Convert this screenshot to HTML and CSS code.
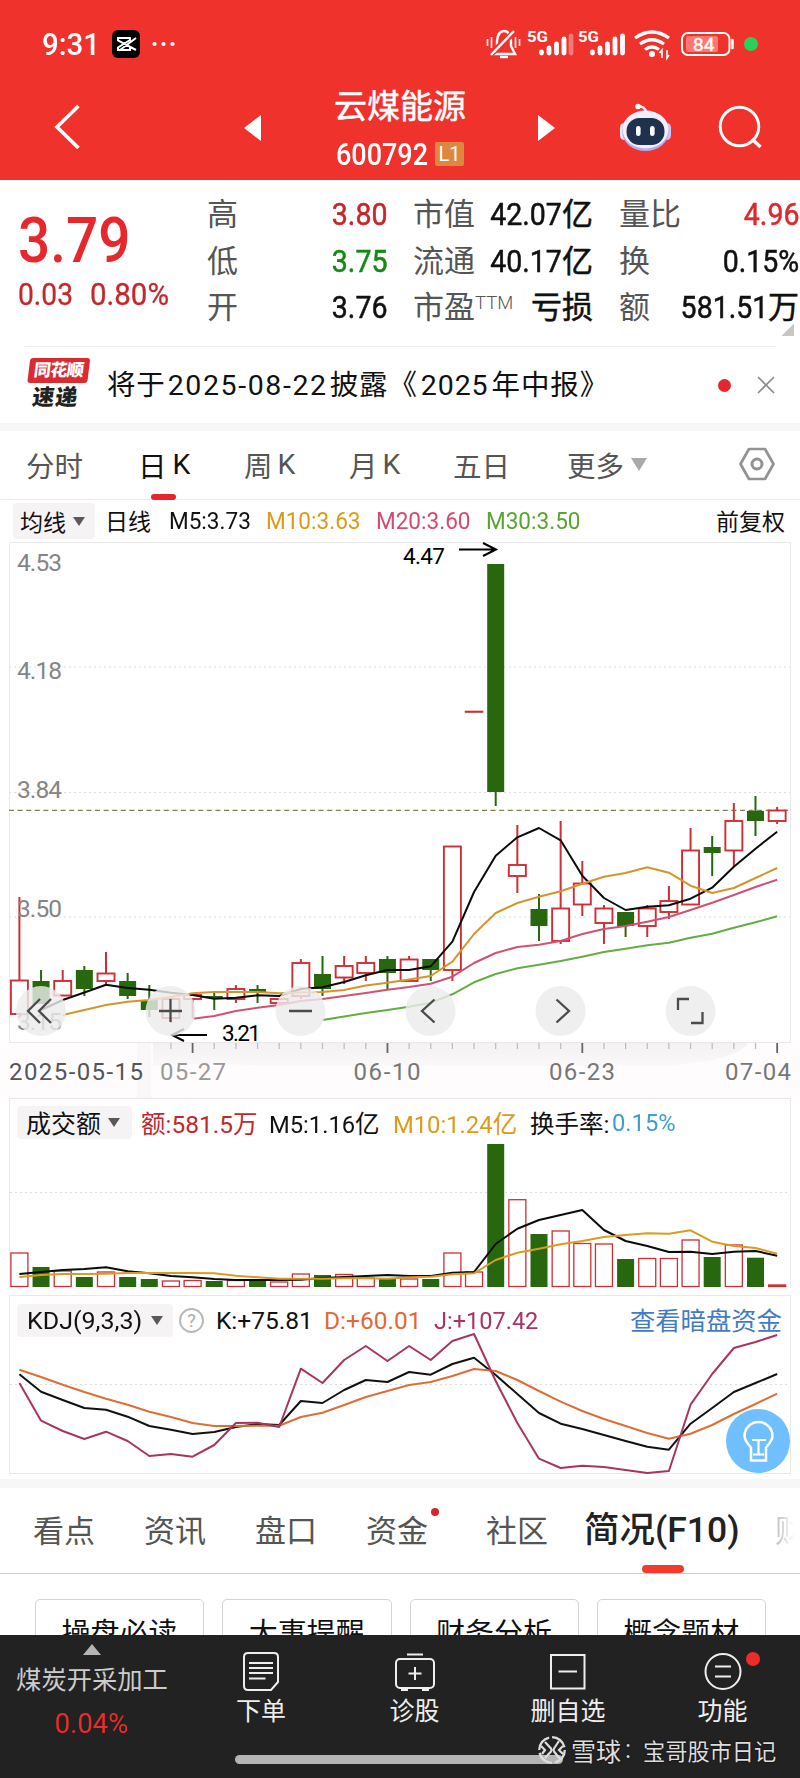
FILE: index.html
```html
<!DOCTYPE html>
<html lang="zh-CN">
<head>
<meta charset="utf-8">
<title>云煤能源 600792</title>
<link rel="stylesheet" href="styles.css">
</head>
<body>
<div class="screen">
  <header class="top">
    <div class="status">
      <span class="clock"><span class="din">9:31</span></span>
      <svg class="app-badge" width="28" height="28" viewBox="0 0 28 28"><rect width="28" height="28" rx="6" fill="#000"/><path d="M24 8 8 20H6V17.500L18 10V8H6V10.500L24 20M8 20H18V17" fill="none" stroke="#fff" stroke-width="2"/></svg>
      <svg class="dots" width="24" height="6" viewBox="0 0 24 6" fill="#fff"><circle cx="2.500" cy="3" r="2.100"/><circle cx="11.500" cy="3" r="2.100"/><circle cx="20.500" cy="3" r="2.100"/></svg>
      <svg class="indicators" width="280" height="36" viewBox="482 26 280 36">
        <g fill="none" stroke="#fff" stroke-width="2.400">
          <path d="M497 49V41Q498 31 504 31T511 41V46L515 54H493Z"/><path d="M490 55 514 32" stroke="#f0322c" stroke-width="6"/><path d="M491 55 514 31"/><path d="M500 57H508"/>
          <path d="M487.500 39V46M491.500 37V48M515.500 37V48M519.500 39V46" stroke-width="1.600"/>
        </g>
        <g fill="#fff" font-family="Roboto" font-size="15.500" font-weight="700"><text x="527" y="42" textLength="21" lengthAdjust="spacingAndGlyphs">5G</text><text x="578" y="42" textLength="21" lengthAdjust="spacingAndGlyphs">5G</text></g>
        <g stroke="#fff" stroke-width="4.800" stroke-linecap="round">
          <path d="M541.500 53V52M549 53V48M556.500 53V44M564 53V39M592.500 53V52M600 53V48M607.500 53V44M615 53V39M622.500 53V36"/><path d="M571 53V36" opacity=".35"/>
        </g>
        <g fill="none" stroke="#fff" stroke-width="3.200"><path d="M635 38Q652 26 669 38M640 44Q652 35.500 664 44M645 49.500Q652 44.500 659 49.500"/></g>
        <circle cx="652" cy="54" r="3" fill="#fff"/><path d="M662 58V50L659.500 53M667 50V58L669 55" fill="none" stroke="#fff" stroke-width="1.600"/>
        <rect x="682" y="33" width="47.500" height="22" rx="6" fill="none" stroke="#fff" stroke-width="2"/>
        <rect x="686" y="36" width="32" height="16" rx="2" fill="#ff7773"/>
        <text x="693" y="51" font-family="Roboto" font-size="19" fill="#fff" stroke="#fff" stroke-width=".4">84</text>
        <path d="M732.500 40V48" stroke="#fff" stroke-width="2.500" stroke-linecap="round"/>
        <circle cx="751" cy="44" r="7" fill="#29d15c"/>
      </svg>
    </div>
    <nav class="nav">
      <svg width="30" height="48" viewBox="52 103 30 48"><path d="M78.500 106 57 127 78.500 148" fill="none" stroke="#fff" stroke-width="3.600"/></svg>
      <svg class="prev" width="18" height="26" viewBox="0 0 18 26"><path d="M0 13 17 0V26Z" fill="#fff"/></svg>
      <div class="stock">
        <h1>云煤能源</h1>
        <div class="code"><span class="code-num"><span class="din">600792</span></span><span class="tag">L1</span></div>
      </div>
      <svg class="next" width="18" height="26" viewBox="0 0 18 26"><path d="M17 13 0 0V26Z" fill="#fff"/></svg>
      <svg class="robot" width="54" height="50" viewBox="618 101 54 50">
        <path d="M636 105Q644 105 645 111" fill="none" stroke="#e8e7ff" stroke-width="2.500"/><circle cx="637" cy="105.500" r="2.800" fill="#fff"/>
        <rect x="619" y="122" width="9" height="17" rx="4.500" fill="#e9e8ff"/><rect x="661" y="122" width="9" height="17" rx="4.500" fill="#c9c6f7"/>
        <ellipse cx="644.500" cy="130" rx="23.500" ry="20" fill="#b4acec"/><ellipse cx="644.500" cy="128.500" rx="23" ry="19" fill="#f0effd"/>
        <rect x="625.500" y="117" width="38" height="27" rx="13" fill="#20304f"/>
        <rect x="635" y="125" width="4.600" height="10" rx="2.300" fill="#fff"/><rect x="649" y="125" width="4.600" height="10" rx="2.300" fill="#fff"/>
      </svg>
      <svg class="search" width="46" height="46" viewBox="717 105 46 46"><circle cx="739.500" cy="127.500" r="19.300" fill="none" stroke="#fff" stroke-width="2.900"/><path d="M752 140 760.500 148" stroke="#fff" stroke-width="3.400"/></svg>
    </nav>
  </header>

  <section class="quote">
    <div class="last">
      <div class="price"><span class="din">3.79</span></div>
      <div class="delta"><span class="din">0.03</span><span class="din">0.80%</span></div>
    </div>
    <dl class="stats">
      <div><dt>高</dt><dd class="up"><span class="din">3.80</span></dd></div>
      <div><dt>市值</dt><dd><span class="din">42.07</span>亿</dd></div>
      <div><dt>量比</dt><dd class="up bright"><span class="din">4.96</span></dd></div>
      <div><dt>低</dt><dd class="down"><span class="din">3.75</span></dd></div>
      <div><dt>流通</dt><dd><span class="din">40.17</span>亿</dd></div>
      <div><dt>换</dt><dd><span class="din">0.15%</span></dd></div>
      <div><dt>开</dt><dd><span class="din">3.76</span></dd></div>
      <div><dt>市盈<sup>TTM</sup></dt><dd>亏损</dd></div>
      <div><dt>额</dt><dd><span class="din">581.51</span>万</dd></div>
    </dl>
    <i class="corner"></i>
  </section>

  <section class="notice">
    <div class="brand"><span class="brand-top">同花顺</span><span class="brand-bottom">速递</span></div>
    <p>将于<span class="date">2025-08-22</span>披露《<span class="year">2025</span>年中报》</p>
    <i class="dot"></i>
    <svg width="18" height="18" viewBox="0 0 18 18"><path d="M1 1 17 17M17 1 1 17" stroke="#8b8b8b" stroke-width="1.700"/></svg>
  </section>

  <nav class="periods">
    <span>分时</span><span class="on">日<b>K</b></span><span>周<b>K</b></span><span>月<b>K</b></span><span>五日</span><span>更多<i class="tri light"></i></span>
    <svg width="36" height="34" viewBox="0 0 36 34" fill="none" stroke="#929292" stroke-linejoin="round"><path d="M10 2H26L34.500 17 26 32H10L1.500 17Z" stroke-width="2.700"/><circle cx="18" cy="17" r="5" stroke-width="3"/></svg>
  </nav>

  <div class="legend ma">
    <button>均线<i class="tri"></i></button><span>日线</span><span class="din">M5:3.73</span><span class="din amber">M10:3.63</span><span class="din rose">M20:3.60</span><span class="din lime">M30:3.50</span><span>前复权</span>
  </div>

  <svg class="chart" id="price" width="800" height="556" viewBox="0 542 800 556">
    <defs><linearGradient id="haze" x1="0" x2="0" y1="0" y2="1"><stop offset="0" stop-color="#f3f1f2"/><stop offset="1" stop-color="#fbf8f9"/></linearGradient></defs>
    <rect y="1043" width="800" height="55" fill="#fefcfd"/>
    <path d="M153 1043H748Q735 1062 660 1066H268Q200 1062 153 1066Z" fill="url(#haze)"/>
    <rect x="137" y="1043" width="14" height="55" fill="#faf7f8"/>
    <path d="M9.500 1042.500V542.500H790.500V1042.500Z" fill="#fff" stroke="#e9e9e9"/>
    <path d="M9 667H790M9 792.500H790M9 917H790" class="grid"/>
    <path d="M9 810.400H790" stroke="#817f52" stroke-width="1.200" stroke-dasharray="5 3.600"/>
    <g id="candles"></g>
    <g id="ma"></g>
    <g class="axis">
      <text x="17" y="571" textLength="45">4.53</text><text x="17" y="679" textLength="45">4.18</text><text x="17" y="798" textLength="45">3.84</text><text x="17" y="917" textLength="45">3.50</text><text x="17" y="1030" textLength="45">3.15</text>
    </g>
    <g class="mark"><text x="403" y="563.500" textLength="42">4.47</text><path d="M459 549.500H495M483 543 496 549.500 483 556"/><text x="222" y="1041" textLength="39">3.21</text><path d="M207 1035H173M184 1029 172 1035 184 1041"/></g>
    <g id="ticks"></g>
    <g class="dates"><text x="9" y="1079.500" textLength="134" fill="#555">2025-05-15</text><text x="160" y="1079.500" textLength="66" fill="#999">05-27</text><text x="353.500" y="1079.500" textLength="67">06-10</text><text x="549" y="1079.500" textLength="66">06-23</text><text x="725" y="1079.500" textLength="66">07-04</text></g>
    <g fill="#ebebeb" fill-opacity=".82"><circle cx="41" cy="1011" r="25"/><circle cx="170.500" cy="1011" r="25"/><circle cx="300.500" cy="1011" r="25"/><circle cx="430.500" cy="1011" r="25"/><circle cx="560.500" cy="1011" r="25"/><circle cx="690.500" cy="1011" r="25"/></g>
    <path d="M40 999 28 1011 40 1023M51 999 39 1011 51 1023M159 1011H182M170.500 999V1022M289 1011H312M434.500 999.500 422 1011 434.500 1022.500M556.500 999.500 569 1011 556.500 1022.500M678 1010V999H689M702.500 1012V1023H691" fill="none" stroke="#4b4b4b" stroke-width="2.300"/>
  </svg>

  <section class="panel volume">
    <div class="legend"><button>成交额<i class="tri"></i></button><span class="up">额:<span class="din first">581.5</span>万</span><span><span class="din">M5:1.16</span>亿</span><span class="amber"><span class="din">M10:1.24</span>亿</span><span>换手率:</span><span class="din sky">0.15%</span></div>
    <svg class="chart" id="volume" width="780" height="143" viewBox="10 1144 780 143"><path d="M10 1192.500H790" class="grid"/></svg>
  </section>

  <section class="panel kdj">
    <div class="legend"><button><span class="din">KDJ(9,3,3)</span><i class="tri"></i></button><i class="help">?</i><span class="din">K:+75.81</span><span class="din orange">D:+60.01</span><span class="din plum">J:+107.42</span><a>查看暗盘资金</a></div>
    <svg class="chart" id="kdj" width="780" height="129" viewBox="10 1344 780 129"><path d="M10 1384.500H790" class="grid"/></svg>
    <svg class="tip" width="64" height="64" viewBox="0 0 64 64"><circle cx="32" cy="32" r="32" fill="#70c0ff"/><g fill="none" stroke="#fff" stroke-width="2.500"><path d="M25 38.500C21 34 18.500 31 18.500 27A14 14 0 0 1 46.500 27C46.500 31 44 34 40 38.500V51.500H25Z"/><path d="M26 31H40M32.500 31V45M27 45.500H38" stroke-width="2.200"/></g></svg>
  </section>

  <nav class="sections">
    <span>看点</span><span>资讯</span><span>盘口</span><span class="new">资金</span><span>社区</span><span class="on">简况(F10)</span><span class="fade">财</span>
  </nav>
  <div class="cards"><div>操盘必读</div><div>大事提醒</div><div>财务分析</div><div>概念题材</div></div>

  <footer class="bottom">
    <div class="sector"><i></i><span>煤炭开采加工</span><em><span class="din">0.04%</span></em></div>
    <div class="action"><svg width="40" height="42" viewBox="0 0 40 42"><path d="M7 3H33Q37 3 37 7V32L30 40H7Q3 40 3 36V7Q3 3 7 3Z"/><path d="M8 13H32M8 18H32M8 23H32M8 28.500H24.500"/></svg><span>下单</span></div>
    <div class="action"><svg width="44" height="42" viewBox="0 0 44 42"><rect x="3" y="9" width="38" height="29" rx="4"/><path d="M14 4.500H30M22 17V30M15.500 23.500H28.500M8 40H15M29 40H36"/></svg><span>诊股</span></div>
    <div class="action"><svg width="40" height="42" viewBox="0 0 40 42"><rect x="3" y="5" width="33.500" height="33.500"/><path d="M10.500 21.500H29"/></svg><span>删自选</span></div>
    <div class="action"><svg width="40" height="42" viewBox="0 0 40 42"><circle cx="20" cy="21.500" r="17.500"/><path d="M12 16.500H28M12 26.500H28"/></svg><b class="badge"></b><span>功能</span></div>
    <i class="home"></i>
    <div class="sign"><svg width="30" height="30" viewBox="0 0 30 30" fill="none" stroke="#ddd"><circle cx="15" cy="15" r="12.800" stroke-width="2.300" stroke-dasharray="17 3"/><path d="M8 7 14 13.500Q15 15 14 16.500L8 23M4 11 8 15 5 19M22 6 17 13.500Q16 15 17 16.500L23 24M26 11 22 15 26 19" stroke-width="2.200"/></svg><span>雪球</span><span class="colon">:</span><span class="author">宝哥股市日记</span></div>
  </footer>
</div>
<script src="chart.js"></script>
</body>
</html>
```
FILE: styles.css
```css
* { box-sizing: border-box; }
body { margin: 0; background: #fff; color: #111; font-family: Roboto, "Noto Sans CJK SC", sans-serif; }
h1, p, dl, dd { margin: 0; font-weight: 400; }
button { border: 0; padding: 0; font: inherit; color: inherit; }
i, em { font-style: normal; }
svg { display: block; flex: none; }
.screen { width: 800px; height: 1778px; overflow: hidden; display: flex; flex-direction: column; }
.screen > * { flex: none; }
.din { display: inline-block; transform: scaleX(.87); transform-origin: left; white-space: nowrap; }
.up { color: #c2282c; }
.down { color: #138a10; }
.amber { color: #dd9a18; }
.rose { color: #d74a6d; }
.lime { color: #58a62f; }
.sky { color: #3d9dd2; }
.orange { color: #e06a35; }
.plum { color: #ad3162; }

.top { height: 180px; background: #f0322c; color: #fff; }
.status { height: 88px; display: flex; align-items: center; padding: 0 38px 0 42px; }
.clock { width: 70px; font-size: 31px; font-weight: 500; }
.clock .din { transform: scaleX(.95); }
.dots { margin-left: 12px; }
.indicators { margin-left: auto; }
.nav { height: 91px; display: flex; align-items: center; padding: 0 37px 0 52px; }
.nav > svg { margin-top: -13px; }
.nav .prev { margin-left: 162px; margin-top: -12px; }
.nav .next { margin-left: 72px; margin-top: -12px; }
.nav .robot { margin-left: 63px; }
.nav .search { margin-left: auto; }
.stock { width: 131px; margin-left: 73px; height: 91px; padding-top: 2px; }
.stock h1 { font-size: 33px; line-height: 34px; white-space: nowrap; font-weight: 400; margin-left: -1px; -webkit-text-stroke: .5px #fff; }
.code { display: flex; align-items: center; height: 36px; margin-top: 12px; }
.code-num { width: 100px; padding-left: 1px; font-size: 31px; font-weight: 500; }
.tag { width: 29px; height: 24px; background: #de883f; border-radius: 2px; font-size: 20px; line-height: 24px; text-align: center; }

.quote { height: 167px; display: flex; position: relative; }
.quote::after { content: ""; position: absolute; left: 25px; right: 25px; bottom: 0; height: 1px; background: #ececec; }
.last { width: 207px; padding: 24px 0 0 18px; }
.price { height: 74px; font-size: 63px; line-height: 74px; font-weight: 500; color: #e6282d; }
.price .din { transform: scaleX(.9); }
.delta { display: flex; font-size: 31px; line-height: 34px; color: #c2282c; -webkit-text-stroke: .3px #c2282c; }
.delta .din { width: 73px; transform: scaleX(.91); }
.delta .din + .din { transform: scaleX(.95); margin-left: -1px; }
.stats { width: 593px; padding-top: 12px; display: grid; grid-template-columns: 180px 180px 180px; column-gap: 26px; grid-auto-rows: 46.700px; line-height: 46px; }
.stats div { display: flex; justify-content: space-between; white-space: nowrap; }
.stats dt { font-size: 31px; color: #555; }
.stats dd { font-size: 31px; font-weight: 400; -webkit-text-stroke: .5px currentColor; }
.stats dd .din { transform-origin: right; transform: scaleX(.92); }
.stats .bright { color: #dc292e; }
.stats sup { font-size: 18.500px; line-height: 0; vertical-align: 9px; font-weight: 300; }
.corner { position: absolute; right: 6px; bottom: 11px; width: 12px; height: 12px; background: linear-gradient(135deg, transparent 50%, #c6c6c6 50%); }

.notice { height: 84px; padding: 0 25px; display: flex; align-items: center; border-bottom: 8px solid #f7f7f7; }
.brand { width: 64px; height: 54px; display: flex; flex-direction: column; align-items: center; transform: skewX(-7deg); font-weight: 900; }
.brand-top { width: 60px; height: 27px; line-height: 25px; text-align: center; background: #dc2b30; color: #fff; border-radius: 3px; font-size: 17px; letter-spacing: -.5px; }
.brand-bottom { font-size: 22px; line-height: 29px; letter-spacing: 1px; color: #222; }
.notice p { margin-left: 18px; margin-top: -6px; font-size: 28.500px; letter-spacing: .9px; white-space: nowrap; width: 600px; }
.date { letter-spacing: 1.600px; margin: 0 2px; }
.year { margin: 0 3px; }
.dot { width: 13px; height: 13px; border-radius: 50%; background: #e6252c; margin-left: 12px; }
.notice > svg { margin-left: 26px; }

.periods { height: 69px; border-bottom: 1px solid #ececec; display: grid; grid-template-columns: 114px 104px 105px 104px 114px 172px 1fr; padding-left: 26px; align-items: center; font-size: 28.500px; color: #555; }
.periods span { display: flex; align-items: center; height: 68px; padding-bottom: 2px; position: relative; }
.periods b { font-weight: 400; margin-left: 5px; }
.periods .on { color: #111; margin-left: -2px; }
.periods .on b { margin-left: 6px; }
.periods .on::after { content: ""; position: absolute; left: 13px; bottom: -1px; width: 25px; height: 6px; border-radius: 3px; background: #e6252c; }
.periods svg { margin-bottom: 2px; }
.tri { width: 0; height: 0; border: 6.500px solid transparent; border-top: 9px solid #5c5759; border-bottom: 0; margin-left: 7px; }
.tri.light { border-width: 13px 8px 0; border-top-color: #aaa; }

.legend { display: grid; align-items: center; white-space: nowrap; }
.legend button { display: flex; align-items: center; background: #f6f3f5; border-radius: 4px; }
.ma { height: 42px; grid-template-columns: 92px 64px 97px 110px 110px 230px 1fr; padding-left: 13px; font-size: 24px; }
.ma > span:not(.din) { font-size: 23px; margin-top: -2px; }
.ma button { width: 82px; height: 36px; padding-left: 7px; font-size: 23px; }
.ma > .din { transform: scaleX(.94); }

.chart { overflow: visible; }
.grid { fill: none; stroke: #dedede; stroke-dasharray: 2 3; }
.axis { font-size: 24.500px; fill: #858585; }
.mark { font-size: 22.500px; fill: #000; }
.mark path { fill: none; stroke: #000; stroke-width: 2; }
.dates { font-size: 24px; fill: #777; }

.panel { margin: 0 9px; border: 1px solid #e9e9e9; position: relative; }
.panel .legend { font-size: 24.500px; padding-left: 7px; }
.panel .legend button { height: 33px; }
.volume { height: 190px; border-bottom: 0; }
.volume .legend { height: 45px; grid-template-columns: 124px 128px 124px 137px 82px 1fr; padding-top: 1px; }
.volume button { width: 115px; padding-left: 9px; font-size: 25px; }
.volume .legend .din { transform: scaleX(.97); margin-right: -3px; }
.volume .legend .first { transform: none; margin: 0; }
.volume .legend .sky { margin: 0; }
.kdj { height: 179px; margin-top: 7px; }
.kdj .legend { height: 48px; grid-template-columns: 162px 37px 108px 110px 196px 1fr; }
.kdj button { width: 156px; padding-left: 8px; }
.kdj button .din { width: 117px; transform: scaleX(1.02); }
.kdj button .tri { margin-left: 9px; }
.kdj .legend > .din { transform: none; }
.kdj .legend > .plum { transform: scaleX(.96); }
.kdj a { color: #427bc4; font-size: 25.300px; margin-top: -2px; }
.help { width: 25px; height: 25px; border: 2px solid #b9b9b9; border-radius: 50%; color: #aaa; font-size: 18px; line-height: 21px; text-align: center; }
.tip { position: absolute; right: 0; bottom: 0; }

.sections { margin-top: 5px; border-top: 9px solid #f7f7f7; height: 95px; border-bottom: 1px solid #ccc; padding-left: 33px; display: grid; grid-template-columns: 111px 111px 111px 120px 98px 191px 1fr; align-items: center; white-space: nowrap; font-size: 31px; color: #555; }
.sections span { position: relative; height: 85px; line-height: 87px; }
.sections .on { font-size: 35.500px; font-weight: 500; color: #222; line-height: 85px; }
.sections .on::after { content: ""; position: absolute; left: 58px; bottom: 0; width: 42px; height: 8px; border-radius: 4px; background: #f03b2d; }
.sections .new::after { content: ""; position: absolute; left: 65px; top: 20px; width: 8px; height: 8px; border-radius: 50%; background: #d2282c; }
.sections .fade { width: 24px; overflow: hidden; background: linear-gradient(90deg, #bbb, #fff 80%); background-clip: text; color: transparent; }
.cards { height: 61px; overflow: hidden; padding: 25px 34px 0 35px; display: grid; grid-template-columns: repeat(4, 1fr); gap: 18px; }
.cards div { height: 76px; border: 1.500px solid #d5d5d5; border-radius: 5px; font-size: 29px; line-height: 69px; text-align: center; }

.bottom { height: 144px; background: #222; color: #eee; display: grid; grid-template-columns: 184px 154px 153px 154px 155px; position: relative; }
.sector { display: flex; flex-direction: column; align-items: center; padding-top: 9px; font-size: 25.300px; color: #ccc; line-height: 35px; }
.sector i { border: 9px solid transparent; border-bottom: 11px solid #b5b5b5; border-top: 0; }
.sector > span { margin-top: 8px; }
.sector em { color: #ed2c28; font-size: 28px; margin-top: 8px; }
.sector .din { transform-origin: center; transform: scaleX(.98); }
.action { display: flex; flex-direction: column; align-items: center; padding-top: 15px; font-size: 25px; line-height: 36px; position: relative; }
.action svg { fill: none; stroke: #eee; stroke-width: 2; }
.action span { margin-top: 2px; }
.badge { position: absolute; left: 101px; top: 17px; width: 14px; height: 14px; border-radius: 50%; background: #ee2b2b; }
.home { position: absolute; left: 235px; top: 120px; width: 328px; height: 9px; border-radius: 5px; background: #b5b5b5; }
.sign { position: absolute; left: 537px; top: 99px; height: 32px; display: flex; align-items: center; font-size: 25px; color: #ddd; text-shadow: 0 0 2px #000; }
.sign span { margin-left: 4px; margin-top: -1px; }
.sign .colon { width: 19px; margin-left: 4px; }
.sign .author { margin-left: -1px; font-size: 22.200px; }
```
FILE: chart.js
```js
const NS = 'http://www.w3.org/2000/svg';
const x = i => 19.4 + 21.65 * i;
const RED = '#cf2e34', GREEN = '#27680e';

function add(parent, tag, attrs) {
  const el = document.createElementNS(NS, tag);
  for (const k in attrs) el.setAttribute(k, attrs[k]);
  parent.appendChild(el);
}
function line(parent, values, color, start = 0) {
  const points = values.map((v, i) => x(i + start) + ',' + v).join(' ');
  add(parent, 'polyline', { points, fill: 'none', stroke: color, 'stroke-width': 2, 'stroke-linejoin': 'round' });
}

// [falling, high, body top, body bottom, low]
const candles = [
  [0,897,980.5,1014,1014],[1,970,981,1004,1004],[0,970,981,995.5,995.5],[1,966,970,989,996],[0,952,973.5,981,984],
  [1,973,981,996,999],[1,985,1000,1010,1017],[0,999,999,1018,1023],[0,993,995,999,1018],[1,993,996,998,1010],
  [0,985,989,999,1003],[1,985,989,993,1003],[0,998.5,999,1003,1003],[0,959,963,996,999],[1,956,974,989,996],
  [0,956,966,977.5,984],[0,956,963,973,981],[1,956,959,973,989],[0,956,959.5,981,981],[1,959,959,970,981],
  [0,846.5,846.5,970,981],[0,711.5,711.5,712,712],[1,564,564,792,806],[0,825,865,876,893],[1,894,909,926,941],
  [0,821,908.5,941,944],[0,861,883.5,904.5,916],[0,905,908.5,923,944],[1,912,912,926,937],[0,905,908.5,926,937],
  [0,886,901,912,919],[0,828,850.5,904.5,904.5],[1,836,847,853,876],[0,803,821,850.5,867],[1,796,811,821,836],[0,807,810.5,821,824]
];
const candleLayer = document.getElementById('candles');
candles.forEach(([falling, high, top, bottom, low], i) => {
  const color = falling ? GREEN : RED;
  add(candleLayer, 'path', { d: `M${x(i)} ${high}V${top}M${x(i)} ${bottom}V${low}`, stroke: color, 'stroke-width': 2 });
  add(candleLayer, 'rect', falling
    ? { x: x(i) - 8.5, y: top, width: 17, height: bottom - top, fill: color }
    : { x: x(i) - 8.5, y: top, width: 17, height: bottom - top, fill: i === 21 ? color : '#fff', stroke: color, 'stroke-width': i === 21 ? 1.6 : 1.9 });
});

const ma = document.getElementById('ma');
line(ma, [1010,1000,992.5,984.7,988,989.7,992.7,995,998.7,997.7,995.3,996,989,987.3,982,975.3,970,970,966.3,941.7,892,855.7,837.3,828,840.3,875.7,898,910,906.7,905.3,898.7,887.7,866.7,848.7,831.7], '#0b0b0b', 1);
line(ma, [1015,1010,1005,1001.7,1000,997,993.3,992,992,992,993.3,992.5,992,990,985.5,982.7,979.5,976,961.7,934,913,903,896.7,891.3,883.7,876.7,873,867.3,872.7,885.7,893,888,878,868], '#d5952c', 2);
line(ma, [1018.7,1016,1011,1007.7,1005,1001,999,996,993,989.7,987,983.7,976.7,963,953,947,944.7,941,934,929,926,921.7,917,910,902.7,895,887,879.7], '#cf5273', 8);
line(ma, [1020,1016.5,1013,1010,1006.7,1002.7,994.3,982.3,974,968.3,964.7,961,956.7,952,948.7,945.3,942.7,937.7,933.7,927.7,922.3,916.3], '#62ae42', 14);

const ticks = document.getElementById('ticks');
for (let i = 7; i < 36; i++) {
  const major = i % 9 === 8;
  add(ticks, 'path', { d: `M${x(i)} 1043V${major ? 1053 : 1049}`, stroke: major ? '#666' : '#bbb', 'stroke-width': major ? 1.8 : 1.2 });
}

const volume = document.getElementById('volume');
[1253,1267,1271,1277,1272,1277,1279,1281,1280.5,1281,1280.5,1280,1282,1274,1275,1274.5,1278,1279,1279,1279,1253,1272,1144,1199.7,1234,1231,1243.5,1244,1259,1258.5,1258.5,1240,1257,1245,1257.7,1285].forEach((top, i) => {
  const falling = candles[i][0];
  add(volume, 'rect', falling
    ? { x: x(i) - 8.5, y: top, width: 17, height: 1287 - top, fill: GREEN }
    : { x: x(i) - 8.5, y: top, width: 17, height: 1286.5 - top, fill: i === 35 ? RED : 'none', stroke: RED, 'stroke-width': 1.3 });
});
line(volume, [1274,1272,1270,1269,1267.3,1271.3,1273.3,1276,1277.3,1279,1280,1280,1280,1279.7,1278,1277,1276,1275,1276,1276,1272.7,1272,1244,1228.7,1220,1215,1210,1230,1241,1246,1252,1251.7,1254,1251.7,1251,1255.7], '#0b0b0b');
line(volume, [1277,1275,1274,1274,1273.7,1273,1273,1273,1273,1273.3,1275.7,1277.3,1278.7,1278.7,1278.7,1278.3,1278.3,1278.7,1277.3,1276.7,1274.3,1273.3,1260,1252.7,1248.7,1244.3,1241,1237,1235,1233.3,1233.7,1230.3,1241.7,1246,1248,1253.7], '#dc9a20');

const kdj = document.getElementById('kdj');
line(kdj, [1374.3,1391.7,1400,1408,1409.7,1416.7,1426,1429.7,1434,1432,1427,1424,1425,1401,1403,1390,1380,1382,1372,1374.7,1364,1357.7,1375,1394,1413,1423.7,1429,1435,1441,1446.7,1449.7,1423.7,1408,1392,1383,1374], '#111');
line(kdj, [1369.7,1377,1384.7,1392,1398.7,1404.7,1411.7,1417,1423,1426,1426,1425.7,1425.7,1417,1412.7,1405,1397,1391,1385,1382,1376,1369,1371,1380,1391,1401.7,1411,1419,1426,1433,1438.7,1433.7,1425,1414,1404,1393.7], '#dd6e38');
line(kdj, [1383,1420.7,1431,1439,1431.7,1441,1456,1454,1456.7,1445,1423,1422.7,1427,1368.7,1383,1360,1346,1361,1346,1360,1341,1334,1381,1423,1458.7,1468,1465.7,1467,1470,1473,1471,1404.7,1374,1348,1342,1335], '#a93462');
```
